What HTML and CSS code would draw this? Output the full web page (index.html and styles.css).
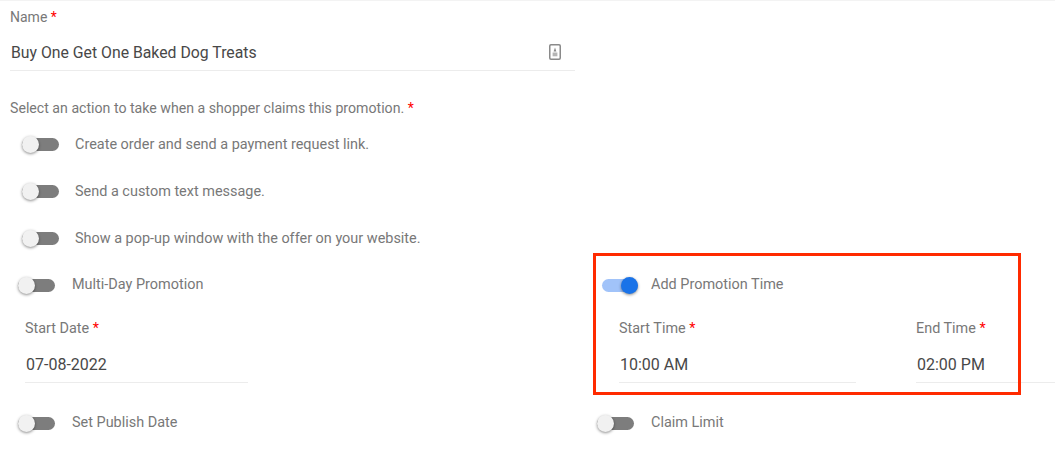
FILE: index.html
```html
<!DOCTYPE html>
<html lang="en">
<head>
<meta charset="utf-8">
<title>Promotion</title>
<link rel="stylesheet" href="styles.css">
</head>
<body>
<main class="page">
  <div class="field field-name">
    <label class="field-label">Name <span class="req">*</span></label>
    <div class="field-value">
      <span>Buy One Get One Baked Dog Treats</span>
      <svg class="field-icon" width="12" height="16" viewBox="0 0 12 16" aria-hidden="true">
        <rect x="0.75" y="0.75" width="10.5" height="14.5" rx="1.2" fill="none" stroke="#8a8a8a" stroke-width="1.5"/>
        <path d="M6 3.5 L7.4 7.5 H4.6 Z" fill="#8a8a8a"/>
        <rect x="3.6" y="8.5" width="4.8" height="3.8" fill="#b5b5b5"/>
      </svg>
    </div>
  </div>
  <p class="prompt">Select an action to take when a shopper claims this promotion. <span class="req">*</span></p>
  <div class="actions">
    <div class="switch-row"><span class="switch"></span><span class="switch-label">Create order and send a payment request link.</span></div>
    <div class="switch-row"><span class="switch"></span><span class="switch-label">Send a custom text message.</span></div>
    <div class="switch-row"><span class="switch"></span><span class="switch-label">Show a pop-up window with the offer on your website.</span></div>
  </div>
  <div class="columns">
    <section class="col col-left">
      <div class="switch-row tight"><span class="switch"></span><span class="switch-label">Multi-Day Promotion</span></div>
      <div class="field field-date">
        <label class="field-label">Start Date <span class="req">*</span></label>
        <div class="field-value">07-08-2022</div>
      </div>
      <div class="switch-row tight last"><span class="switch"></span><span class="switch-label">Set Publish Date</span></div>
    </section>
    <section class="col col-right">
      <div class="switch-row tight"><span class="switch on"></span><span class="switch-label">Add Promotion Time</span></div>
      <div class="times">
        <div class="field field-start">
          <label class="field-label">Start Time <span class="req">*</span></label>
          <div class="field-value">10:00 AM</div>
        </div>
        <div class="field field-end">
          <label class="field-label">End Time <span class="req">*</span></label>
          <div class="field-value">02:00 PM</div>
        </div>
      </div>
      <div class="switch-row tight last"><span class="switch"></span><span class="switch-label">Claim Limit</span></div>
      <div class="highlight"></div>
    </section>
  </div>
</main>
</body>
</html>
```

FILE: styles.css
```css
* { box-sizing: border-box; }
html, body { margin: 0; height: 100%; }
body {
  background: #fff;
  font-family: Roboto, "Liberation Sans", sans-serif;
  overflow: hidden;
}
.page {
  height: 452px;
  border-top: 1px solid #f3f3f3;
  padding-top: 8px;
}
.req { color: #f00; }

.field-label {
  display: block;
  height: 17px;
  font-size: 14px;
  line-height: 17px;
  color: #787878;
}
.field-value {
  display: flex;
  align-items: center;
  justify-content: space-between;
  height: 45px;
  padding: 8px 14px 0 1px;
  font-size: 15.8px;
  color: #484848;
  border-bottom: 1px solid #ececec;
}
.field-name { width: 565px; margin-left: 10px; }
.field-icon { display: block; margin-top: -8px; position: relative; top: 4px; }

.prompt {
  margin: 29px 0 0 10px;
  height: 17px;
  font-size: 14.15px;
  line-height: 17px;
  color: #787878;
}

.actions { margin-top: 4px; padding-left: 22px; }
.switch-row {
  display: flex;
  align-items: center;
  height: 47px;
  gap: 16px;
}
.switch-label {
  font-size: 14.45px;
  color: #787878;
}
.switch {
  position: relative;
  flex: none;
  width: 37px;
  height: 13px;
  border-radius: 7px;
  background: #7d7d7d;
}
.switch::after {
  content: "";
  position: absolute;
  left: 0;
  top: -2px;
  width: 17px;
  height: 17px;
  border-radius: 50%;
  background: #f1f1f1;
  box-shadow: 0 1px 3px rgba(0,0,0,.45);
}
.switch.on { background: #a1c3f9; width: 36px; margin-left: 5px; margin-right: -4px; }
.switch.on::after { left: 19px; background: #1a73e8; }

.columns {
  display: grid;
  grid-template-columns: 597px 458px;
}
.col { position: relative; }
.col-left { padding-left: 18px; }
.tight { height: 46px; gap: 17px; }
.tight .switch-label { position: relative; top: -1px; }
.tight.last { height: 40px; margin-top: 20px; }

.col .field { margin-top: 12px; }
.col .field-label { font-size: 14.4px; }
.col .field-value { height: 46px; padding-top: 9px; font-size: 16px; }

.field-date { width: 223px; margin-left: 7px; }
.times {
  display: flex;
  margin-left: 22px;
}
.field-start { width: 237px; }
.field-end { width: 139px; margin-left: 60px; }

.highlight {
  position: absolute;
  left: -4px;
  top: -9px;
  width: 428px;
  height: 142px;
  border: 3px solid #ff2a00;
}
```
